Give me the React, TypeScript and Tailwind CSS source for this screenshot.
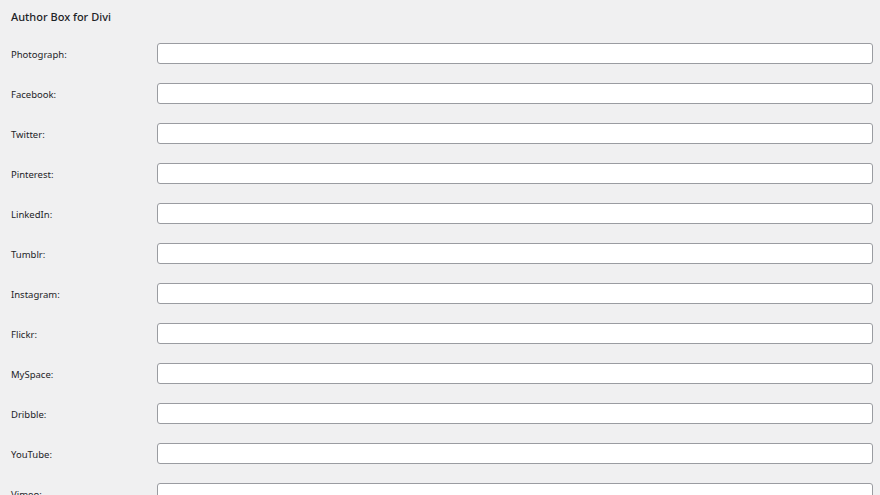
import React from "react";

const labels = [
  "Photograph:",
  "Facebook:",
  "Twitter:",
  "Pinterest:",
  "LinkedIn:",
  "Tumblr:",
  "Instagram:",
  "Flickr:",
  "MySpace:",
  "Dribble:",
  "YouTube:",
  "Vimeo:",
];

export default function App() {
  return (
    <div
      className="w-full bg-[#f0f0f1] pl-[11px] pr-[7px] text-[#1d2327] overflow-hidden h-[495px]"
      style={{ fontFamily: '"Noto Sans", "Open Sans", sans-serif' }}
    >
      <div className="h-[33px] flex items-center">
        <h2 className="text-[11px] font-medium leading-none">Author Box for Divi</h2>
      </div>
      <div className="flex flex-col">
        {labels.map((l) => (
          <div key={l} className="flex items-center h-[40px]">
            <div className="w-[146px] text-[9.5px] pt-[3px] leading-none">{l}</div>
            <input
              type="text"
              className="flex-1 h-[21px] bg-white border border-[#9a9ca1] rounded-[3px] outline-none"
            />
          </div>
        ))}
      </div>
    </div>
  );
}
